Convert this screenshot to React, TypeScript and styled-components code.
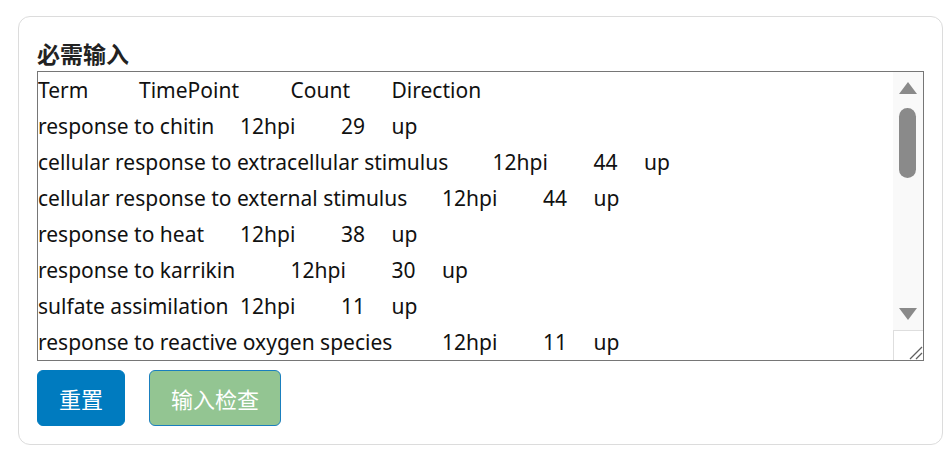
import { useRef, useState } from "react";
import styled, { createGlobalStyle } from "styled-components";

const GlobalStyle = createGlobalStyle`
  html, body {
    margin: 0;
    padding: 0;
    background: #ffffff;
  }
  body {
    font-family: "Noto Sans", "Noto Sans CJK SC", sans-serif;
    color: #212529;
  }
`;

// the karrikin row carries a doubled tab in the source data
const rows = [
  ["Term", "TimePoint", "Count", "Direction"],
  ["response to chitin", "12hpi", "29", "up"],
  ["cellular response to extracellular stimulus", "12hpi", "44", "up"],
  ["cellular response to external stimulus", "12hpi", "44", "up"],
  ["response to heat", "12hpi", "38", "up"],
  ["response to karrikin\t", "12hpi", "30", "up"],
  ["sulfate assimilation", "12hpi", "11", "up"],
  ["response to reactive oxygen species", "12hpi", "11", "up"],
  ["response to wounding", "12hpi", "52", "up"],
  ["defense response to fungus", "12hpi", "27", "up"],
  ["response to hydrogen peroxide", "12hpi", "19", "up"],
  ["response to salicylic acid", "12hpi", "23", "up"],
  ["response to jasmonic acid", "12hpi", "31", "up"],
  ["photosynthesis", "12hpi", "40", "down"],
  ["response to light stimulus", "12hpi", "36", "down"],
  ["chloroplast organization", "12hpi", "17", "down"],
  ["response to cold", "12hpi", "25", "down"],
  ["cell wall organization", "12hpi", "21", "down"],
  ["response to water deprivation", "12hpi", "33", "down"],
];

const sampleText = rows.map((r) => r.join("\t")).join("\n");

const THUMB_HEIGHT = 70;
const THUMB_INSET = 6;
const TRACK_HEIGHT = 198;

const Card = styled.section`
  margin: 16px 8px 0 18px;
  padding: 18px;
  border: 1px solid #dcdcdc;
  border-radius: 12px;
  display: flex;
  flex-direction: column;
`;

const Title = styled.label`
  font-family: "Noto Sans CJK SC", sans-serif;
  font-size: 23px;
  font-weight: 700;
  line-height: 36px;
  color: #222222;
`;

const Field = styled.div`
  position: relative;
  height: 290px;
`;

const InputArea = styled.textarea`
  box-sizing: border-box;
  width: 100%;
  height: 100%;
  margin: 0;
  padding: 0 30px 0 0;
  border: 1px solid #767676;
  border-radius: 0;
  font-family: "Noto Sans", sans-serif;
  font-size: 21px;
  line-height: 36px;
  color: #111111;
  tab-size: 50.5px;
  white-space: pre;
  overflow-x: hidden;
  overflow-y: scroll;
  scrollbar-width: none;
  resize: none;
  outline: none;
  display: block;

  &::-webkit-scrollbar {
    display: none;
  }
`;

const ScrollBar = styled.div`
  position: absolute;
  top: 1px;
  right: 1px;
  bottom: 1px;
  width: 30px;
  display: flex;
  flex-direction: column;
  background: #f9f9f9;
`;

const Arrow = styled.div<{ $dir: "up" | "down" }>`
  height: 30px;
  display: flex;
  align-items: center;
  justify-content: center;

  &::before {
    content: "";
    width: 0;
    height: 0;
    border-left: 9px solid transparent;
    border-right: 9px solid transparent;
    ${(p) =>
      p.$dir === "up"
        ? "border-bottom: 12px solid #8a8a8a; margin-top: 2px;"
        : "border-top: 12px solid #8a8a8a; margin-top: -2px;"}
  }
`;

const Track = styled.div`
  position: relative;
  height: ${TRACK_HEIGHT}px;
`;

const Thumb = styled.div`
  position: absolute;
  left: 6px;
  width: 17px;
  height: ${THUMB_HEIGHT}px;
  border-radius: 9px;
  background: #8a8a8a;
`;

const Corner = styled.div`
  flex: 1;
  background: #ffffff;
  border-top: 1px solid #dedede;
  border-left: 1px solid #dedede;
  display: flex;
  align-items: flex-end;
  justify-content: flex-end;
`;

const ButtonRow = styled.div`
  display: flex;
  gap: 24px;
  margin-top: 9px;
`;

const Button = styled.button<{ $variant: "primary" | "disabled" }>`
  box-sizing: border-box;
  height: 56px;
  padding: 0 21px;
  border-radius: 6px;
  border: 1px solid ${(p) => (p.$variant === "primary" ? "#007bbf" : "#1a7fbe")};
  background: ${(p) => (p.$variant === "primary" ? "#007bbf" : "#93c592")};
  color: #ffffff;
  font-family: "Noto Sans CJK SC", sans-serif;
  font-size: 22px;
  line-height: 1;
  cursor: ${(p) => (p.$variant === "primary" ? "pointer" : "not-allowed")};
`;

export default function App() {
  const areaRef = useRef<HTMLTextAreaElement | null>(null);
  const [thumbTop, setThumbTop] = useState(THUMB_INSET);

  const handleScroll = () => {
    const el = areaRef.current;
    if (!el) return;
    const max = el.scrollHeight - el.clientHeight;
    const ratio = max > 0 ? el.scrollTop / max : 0;
    setThumbTop(THUMB_INSET + ratio * (TRACK_HEIGHT - THUMB_HEIGHT - THUMB_INSET * 2));
  };

  return (
    <>
      <GlobalStyle />
      <Card>
        <Title htmlFor="required-input">必需输入</Title>
        <Field>
          <InputArea
            id="required-input"
            ref={areaRef}
            defaultValue={sampleText}
            spellCheck={false}
            onScroll={handleScroll}
          />
          <ScrollBar>
            <Arrow $dir="up" />
            <Track>
              <Thumb style={{ top: thumbTop }} />
            </Track>
            <Arrow $dir="down" />
            <Corner>
              <svg width="16" height="16" viewBox="0 0 16 16">
                <path d="M15 3 L3 15 M15 9 L9 15" stroke="#5f5f5f" strokeWidth="1.3" />
              </svg>
            </Corner>
          </ScrollBar>
        </Field>
        <ButtonRow>
          <Button $variant="primary">重置</Button>
          <Button $variant="disabled" disabled>
            输入检查
          </Button>
        </ButtonRow>
      </Card>
    </>
  );
}
